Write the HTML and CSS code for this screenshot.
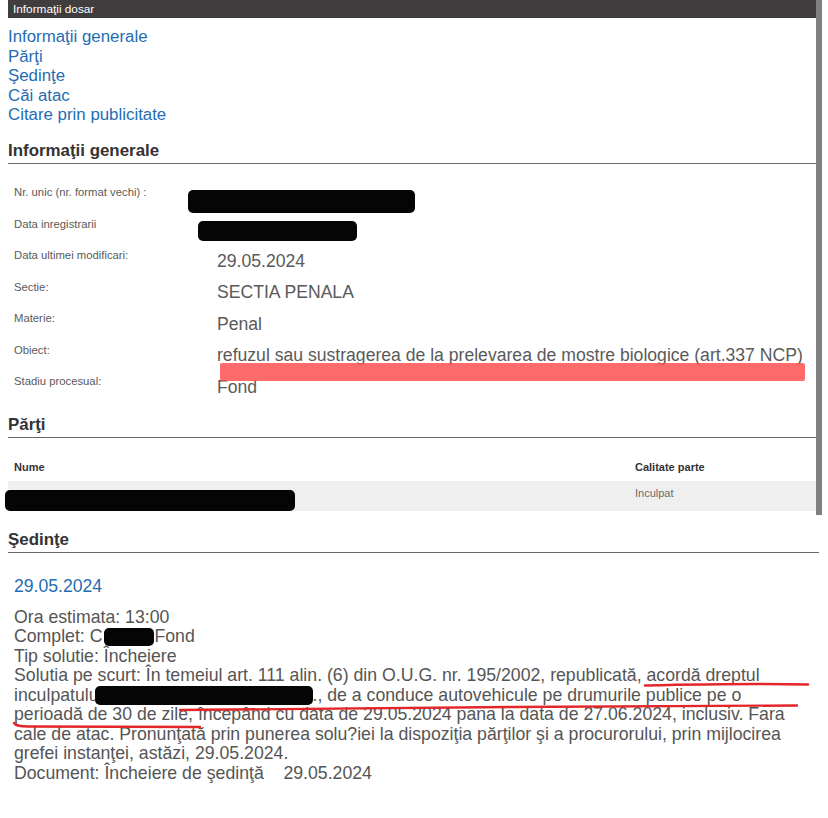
FILE: index.html
```html
<!DOCTYPE html>
<html lang="ro">
<head>
<meta charset="utf-8">
<title>Informaţii dosar</title>
<link rel="stylesheet" href="styles.css">
</head>
<body>
<div class="page">
  <div class="topbar">Informaţii dosar</div>
  <nav class="nav">
    <a href="#gen">Informaţii generale</a>
    <a href="#parti">Părţi</a>
    <a href="#sed">Şedinţe</a>
    <a href="#cai">Căi atac</a>
    <a href="#cit">Citare prin publicitate</a>
  </nav>

  <h2 class="sec" id="gen">Informaţii generale</h2>
  <div class="info">
    <div class="lbl">Nr. unic (nr. format vechi) :</div>
    <div class="val"><span class="redact r-nr"></span></div>
    <div class="lbl">Data inregistrarii</div>
    <div class="val"><span class="redact r-data"></span></div>
    <div class="lbl">Data ultimei modificari:</div>
    <div class="val">29.05.2024</div>
    <div class="lbl">Sectie:</div>
    <div class="val">SECTIA PENALA</div>
    <div class="lbl">Materie:</div>
    <div class="val">Penal</div>
    <div class="lbl">Obiect:</div>
    <div class="val">refuzul sau sustragerea de la prelevarea de mostre biologice (art.337 NCP)</div>
    <div class="lbl">Stadiu procesual:</div>
    <div class="val">Fond</div>
    <span class="marker"></span>
  </div>

  <h2 class="sec" id="parti">Părţi</h2>
  <table class="parti">
    <thead>
      <tr><th class="c-nume">Nume</th><th class="c-cal">Calitate parte</th></tr>
    </thead>
    <tbody>
      <tr><td class="c-nume"><span class="redact r-nume"></span></td><td class="c-cal">Inculpat</td></tr>
    </tbody>
  </table>

  <h2 class="sec" id="sed">Şedinţe</h2>
  <div class="session">
    <div class="sdate">29.05.2024</div>
    <div class="sbody">Ora estimata: 13:00<br>Complet: C<span class="redact r-complet"></span>Fond<br>Tip solutie: Încheiere<br>Solutia pe scurt: În temeiul art. 111 alin. (6) din O.U.G. nr. 195/2002, republicată, acordă dreptul<br>inculpatului<span class="redact r-inc"></span>., de a conduce autovehicule pe drumurile publice pe o<br>perioadă de 30 de zile, începând cu data de 29.05.2024 pana la data de 27.06.2024, inclusiv. Fara<br>cale de atac. Pronunţată prin punerea solu?iei la dispoziţia părţilor şi a procurorului, prin mijlocirea<br>grefei instanţei, astăzi, 29.05.2024.<br>Document: Încheiere de şedinţă&nbsp;&nbsp;&nbsp; 29.05.2024</div>
    <svg class="marks" width="810" height="170" viewBox="0 0 810 170">
      <path d="M637 108.5 C 700 107, 760 106.5, 800 107.5" />
      <path d="M172 133 C 350 131, 600 129, 789 128.5" />
      <path d="M6 146 C 8 149, 12 149.5, 20 149.5 L 192 150" />
    </svg>
  </div>
  <div class="session next">
    <div class="sdate">17.04.2024</div>
  </div>
  <div class="scrollbar"></div>
</div>
</body>
</html>
```

FILE: styles.css
```css
* { box-sizing: border-box; }

html, body {
  margin: 0;
  padding: 0;
  background: #ffffff;
  overflow: hidden;
}

body {
  font-family: "Liberation Sans", Arial, sans-serif;
  color: #555555;
}

.page {
  position: relative;
  margin: 0 8px;
  width: 811px;
}

.topbar {
  height: 18px;
  line-height: 18px;
  background: #3f3d3e;
  color: #ffffff;
  font-size: 11.8px;
  padding-left: 5px;
}

.nav {
  display: flex;
  flex-direction: column;
  margin-top: 9px;
}

.nav a {
  font-size: 16.85px;
  line-height: 19.5px;
  color: #1f6db3;
  text-decoration: none;
}

.sec {
  margin: 16.5px 0 0;
  font-size: 16.9px;
  line-height: 19px;
  font-weight: bold;
  color: #333333;
  padding-bottom: 3px;
  border-bottom: 1px solid #6a6a6a;
}

.info {
  position: relative;
  display: grid;
  grid-template-columns: 209px 1fr;
  grid-auto-rows: 31.5px;
  margin-top: 19px;
}

.lbl {
  font-size: 11.3px;
  line-height: 13px;
  padding: 3px 0 0 6px;
  color: #5a5a5a;
}

.val {
  font-size: 17.6px;
  line-height: 18px;
  padding-top: 5.5px;
  color: #5a5a5a;
  white-space: nowrap;
}

.redact {
  display: inline-block;
  background: #050505;
  border-radius: 5px;
  filter: blur(0.6px);
  vertical-align: top;
}

.r-nr {
  width: 227px;
  height: 23px;
  margin: 1px 0 0 -29px;
}

.r-data {
  width: 159px;
  height: 20px;
  margin: 0.5px 0 0 -19px;
}

.marker {
  position: absolute;
  left: 212px;
  top: 179.5px;
  width: 585px;
  height: 18px;
  background: rgba(255, 80, 80, 0.85);
  border-radius: 2px;
  filter: blur(0.7px);
}

.sec + .info { margin-top: 19px; }
.info + .sec { margin-top: 11.5px; }

.parti {
  width: 100%;
  border-collapse: collapse;
  font-size: 11px;
  line-height: 13px;
}

.parti th {
  height: 43px;
  vertical-align: bottom;
  padding: 0 0 7px 6px;
  text-align: left;
  font-weight: bold;
  color: #333333;
}

.parti td {
  height: 30px;
  vertical-align: top;
  padding: 6px 0 0 6px;
  background: #efefef;
  color: #6a6a6a;
}

.parti .c-nume { width: 621px; }

.r-nume {
  width: 290px;
  height: 21px;
  margin: 3px 0 0 -9px;
}

.parti + .sec { margin-top: 18.5px; }

.session {
  position: relative;
  margin-top: 24.5px;
  padding-left: 6px;
}

.sdate {
  font-size: 17.6px;
  line-height: 19px;
  color: #1f6db3;
}

.sbody {
  margin-top: 11.75px;
  font-size: 17.7px;
  line-height: 19.5px;
  color: #555555;
  white-space: nowrap;
}

.r-complet {
  width: 50px;
  height: 18px;
  margin: 0.5px 0 0 2px;
}

.r-inc {
  width: 218px;
  height: 19px;
  margin: 0.5px 0 0 -8px;
}

.marks {
  position: absolute;
  left: 0;
  top: 0;
  fill: none;
  stroke: #e3262a;
  stroke-width: 2.4;
  stroke-linecap: round;
}

.session.next {
  margin-top: 33px;
}

.scrollbar {
  position: absolute;
  left: 808px;
  top: 0;
  width: 6px;
  height: 515px;
  background: #7f7f7f;
}
```
